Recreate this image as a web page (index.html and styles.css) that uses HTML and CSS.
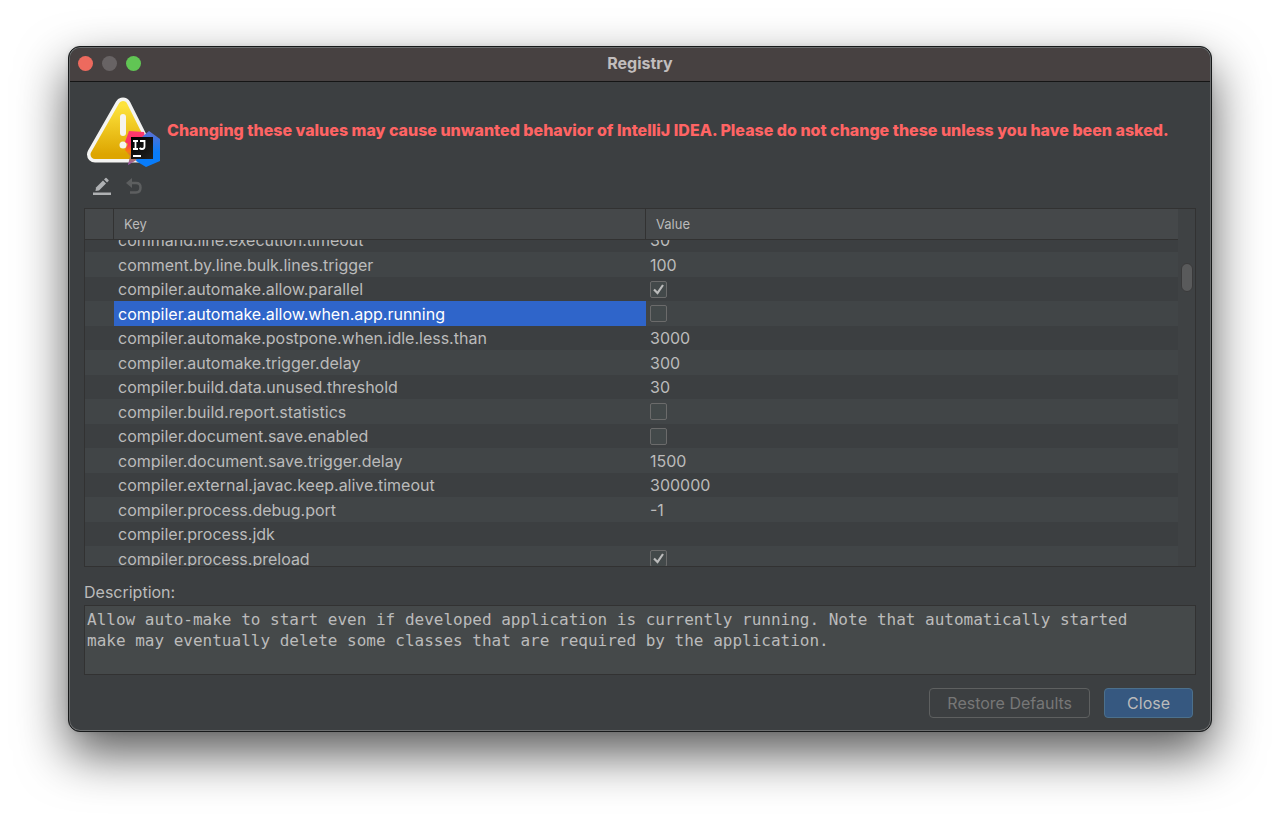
FILE: index.html
```html
<!DOCTYPE html>
<html lang="en">
<head>
    <meta charset="UTF-8">
    <title>Registry</title>
    <link rel="stylesheet" href="styles.css">
</head>
<body>
    <div class="window">
        <header class="titlebar">
            <div class="lights">
                <button class="light light-close" aria-label="Close window"></button>
                <button class="light light-min" aria-label="Minimize" disabled></button>
                <button class="light light-zoom" aria-label="Zoom"></button>
            </div>
            <h1 class="title">Registry</h1>
        </header>

        <main class="content">
            <div class="warning">
                <svg class="warning-icon" width="76" height="74" viewBox="0 0 76 74">
                    <defs>
                        <linearGradient id="yellow" x1="0" y1="0" x2="0" y2="1">
                            <stop offset="0" stop-color="#fde33c"/>
                            <stop offset="1" stop-color="#dda500"/>
                        </linearGradient>
                        <linearGradient id="blue" x1="0" y1="0" x2="0" y2="1">
                            <stop offset="0" stop-color="#5f6fd0"/>
                            <stop offset="0.6" stop-color="#087cfa"/>
                        </linearGradient>
                        <linearGradient id="orange" x1="0" y1="0" x2="0" y2="1">
                            <stop offset="0" stop-color="#ff3a72"/>
                            <stop offset="0.4" stop-color="#fe315d"/>
                            <stop offset="0.6" stop-color="#f97a12"/>
                            <stop offset="0.8" stop-color="#b07b58"/>
                            <stop offset="1" stop-color="#9e4fc0"/>
                        </linearGradient>
                        <linearGradient id="black" x1="0" y1="0" x2="1" y2="1">
                            <stop offset="0" stop-color="#000"/>
                            <stop offset="1" stop-color="#222"/>
                        </linearGradient>
                    </defs>
                    <path d="M37 9.500L61.500 58.500H9Z" fill="#f4f4f2" stroke="#f4f4f2" stroke-width="16" stroke-linejoin="round"/>
                    <path d="M37 9.500L61.500 58.500H9Z" fill="url(#yellow)" stroke="url(#yellow)" stroke-width="9" stroke-linejoin="round"/>
                    <path d="M37 21V37" stroke="#f6f4ee" stroke-width="6" stroke-linecap="round"/>
                    <circle cx="37" cy="49" r="3.500" fill="#f6f4ee"/>
                    <path d="M43 35L58 36L60 46L54 62L42 69L44 60L39 54L42 48L39 46Z" fill="url(#orange)"/>
                    <path d="M56 41L63 35L74 43V65L60 71L50 65Z" fill="url(#blue)"/>
                    <path d="M45 41H67V63H45Z" fill="url(#black)"/>
                    <path d="M47 45H52M49.500 45V53M47 53H52M54 45H58.500V50.500Q58.500 53 56 53Q54.500 53 53.500 52M47 60H55" fill="none" stroke="#fff" stroke-width="1.800"/>
                </svg>
                <strong class="warning-text">Changing these values may cause unwanted behavior of IntelliJ IDEA. Please do not change these unless you have been asked.</strong>
            </div>

            <div class="toolbar">
                <button class="tool" aria-label="Edit">
                    <svg width="20" height="20" viewBox="0 0 20 20" fill="#afb1b3">
                        <path d="M4 10.500L11 3.500L14 6.500L7 13.500L3.500 14Z"/>
                        <path d="M12 2.500L13.500 1Q14 0.500 14.500 1L16.500 3Q17 3.500 16.500 4L15 5.500Z"/>
                        <path d="M1 15.500H19V18H1Z"/>
                    </svg>
                </button>
                <button class="tool" aria-label="Revert" disabled>
                    <svg width="20" height="20" viewBox="0 0 20 20">
                        <path d="M8 1V11L2 6Z" fill="#5d5f60"/>
                        <path d="M7 6H12Q16.500 6 16.500 10.500Q16.500 15.500 12 15.500H6" fill="none" stroke="#5d5f60" stroke-width="2.500"/>
                    </svg>
                </button>
            </div>

            <div class="registry">
                <div class="scroll-area">
                    <table class="keys">
                        <thead>
                            <tr><th class="col-mark"></th><th>Key</th><th>Value</th></tr>
                        </thead>
                        <tbody>
                            <tr><td></td><td>command.line.execution.timeout</td><td>30</td></tr>
                            <tr><td></td><td>comment.by.line.bulk.lines.trigger</td><td>100</td></tr>
                            <tr><td></td><td>compiler.automake.allow.parallel</td><td><input type="checkbox" aria-label="compiler.automake.allow.parallel" checked></td></tr>
                            <tr><td></td><td class="selected">compiler.automake.allow.when.app.running</td><td><input type="checkbox" aria-label="compiler.automake.allow.when.app.running"></td></tr>
                            <tr><td></td><td>compiler.automake.postpone.when.idle.less.than</td><td>3000</td></tr>
                            <tr><td></td><td>compiler.automake.trigger.delay</td><td>300</td></tr>
                            <tr><td></td><td>compiler.build.data.unused.threshold</td><td>30</td></tr>
                            <tr><td></td><td>compiler.build.report.statistics</td><td><input type="checkbox" aria-label="compiler.build.report.statistics"></td></tr>
                            <tr><td></td><td>compiler.document.save.enabled</td><td><input type="checkbox" aria-label="compiler.document.save.enabled"></td></tr>
                            <tr><td></td><td>compiler.document.save.trigger.delay</td><td>1500</td></tr>
                            <tr><td></td><td>compiler.external.javac.keep.alive.timeout</td><td>300000</td></tr>
                            <tr><td></td><td>compiler.process.debug.port</td><td>-1</td></tr>
                            <tr><td></td><td>compiler.process.jdk</td><td></td></tr>
                            <tr><td></td><td>compiler.process.preload</td><td><input type="checkbox" aria-label="compiler.process.preload" checked></td></tr>
                        </tbody>
                    </table>
                </div>
                <div class="scrollbar"><div class="thumb"></div></div>
            </div>

            <label class="desc-label" for="description">Description:</label>
            <textarea class="desc" id="description" spellcheck="false" readonly>Allow auto-make to start even if developed application is currently running. Note that automatically started make may eventually delete some classes that are required by the application.</textarea>

            <div class="actions">
                <button class="btn" disabled>Restore Defaults</button>
                <button class="btn btn-primary">Close</button>
            </div>
        </main>
    </div>
    <script>
        // start part-way down the list
        document.querySelector(".scroll-area").scrollTop = 12;
    </script>
</body>
</html>
```
FILE: styles.css
```css
* {
    box-sizing: border-box;
}
body {
    margin: 0;
    height: 100vh;
    padding: 46px 68px 90px;
    display: flex;
    background: #fff;
    color: #bbb;
    font: 16px/24px Inter, "Liberation Sans", sans-serif;
    overflow: hidden;
}
button, textarea, input {
    margin: 0;
    font: inherit;
}
.window {
    flex: 1;
    min-width: 0;
    display: flex;
    flex-direction: column;
    border: 1px solid #17191a;
    border-radius: 12px;
    background: #3c3f41;
    box-shadow: inset 0 0 0 1px #6b6d6e, 0 0 4px rgba(0, 0, 0, .1), 0 22px 50px rgba(0, 0, 0, .65);
}

/* title bar */
.titlebar {
    display: grid;
    grid-template-columns: 1fr auto 1fr;
    align-items: center;
    height: 34px;
    margin: 1px 1px 0;
    padding: 0 8px 3px;
    border-bottom: 1px solid #151515;
    border-radius: 11px 11px 0 0;
    background: #474141;
}
.lights {
    display: flex;
    gap: 9px;
}
.light {
    width: 15px;
    height: 15px;
    padding: 0;
    border: 0;
    border-radius: 50%;
}
.light-close {
    background: #ed6a5e;
}
.light-min {
    background: #686364;
}
.light-zoom {
    background: #61c554;
}
.title {
    margin: 0;
    font-size: 16px;
    line-height: 24px;
    font-weight: 700;
    color: #c1bdbd;
}

/* content */
.content {
    flex: 1;
    min-height: 0;
    display: flex;
    flex-direction: column;
    padding: 14px 15px 13px;
}
.warning {
    display: flex;
    align-items: center;
    padding-left: 2px;
}
.warning-icon {
    flex: none;
    margin-right: 5px;
}
.warning-text {
    padding-bottom: 6px;
    color: #ff6464;
    font-weight: 800;
    white-space: nowrap;
}
.toolbar {
    display: flex;
    gap: 12px;
    padding: 7px 8px 11px;
}
.tool {
    display: flex;
    padding: 0;
    border: 0;
    background: none;
}
.registry {
    flex: 1;
    min-height: 0;
    display: flex;
    border: 1px solid #323232;
}
.scroll-area {
    flex: 1;
    overflow: hidden;
}
.keys {
    width: 100%;
    table-layout: fixed;
    border-collapse: separate;
    border-spacing: 0;
}
.keys th {
    position: sticky;
    top: 0;
    z-index: 1;
    height: 31px;
    padding: 0 10px;
    border-bottom: 1px solid #323232;
    background: #45484a;
    font-size: 13px;
    line-height: 20px;
    font-weight: 400;
    text-align: left;
}
.keys th:not(:last-child) {
    border-right: 1px solid #323232;
}
.keys .col-mark {
    width: 29px;
}
.keys td {
    height: 24px;
    padding: 0 4px;
    line-height: 24px;
    white-space: nowrap;
}
.keys tr:nth-child(even) td {
    height: 25px;
    background: #414547;
}
.keys .selected,
.keys tr:nth-child(even) .selected {
    background: #2f65ca;
    color: #fff;
}
.keys input {
    appearance: none;
    display: block;
    width: 17px;
    height: 17px;
    border: 1px solid #6b6b6b;
    border-radius: 2px;
    background: #43494a;
}
.keys input:checked {
    background: #43494a url("data:image/svg+xml,%3Csvg xmlns='http://www.w3.org/2000/svg' viewBox='0 0 15 15'%3E%3Cpath d='M3 7.500L6.500 11L12 3' fill='none' stroke='%23bbb' stroke-width='2.200'/%3E%3C/svg%3E");
}
.scrollbar {
    width: 17px;
    padding: 54px 2px 0 3px;
    background: #3f4244;
}
.thumb {
    height: 29px;
    border: 1px solid #3a3a3b;
    border-radius: 6px;
    background: #595a5b;
}
.desc-label {
    margin-top: 13px;
    padding-bottom: 1px;
}
.desc {
    height: 70px;
    padding: 3px 40px 3px 2px;
    border: 1px solid #323232;
    outline: 0;
    resize: none;
    background: #45494a;
    color: #bbb;
    font: 16px/21px "DejaVu Sans Mono", monospace;
}
.actions {
    display: flex;
    justify-content: flex-end;
    gap: 14px;
    padding: 13px 3px 0 0;
}
.btn {
    height: 30px;
    padding: 0 17px;
    border: 1px solid #5e6060;
    border-radius: 4px;
    background: none;
    color: #777;
}
.btn-primary {
    padding: 0 22px;
    border-color: #4c708c;
    background: #365880;
    color: #bbb;
}
```
